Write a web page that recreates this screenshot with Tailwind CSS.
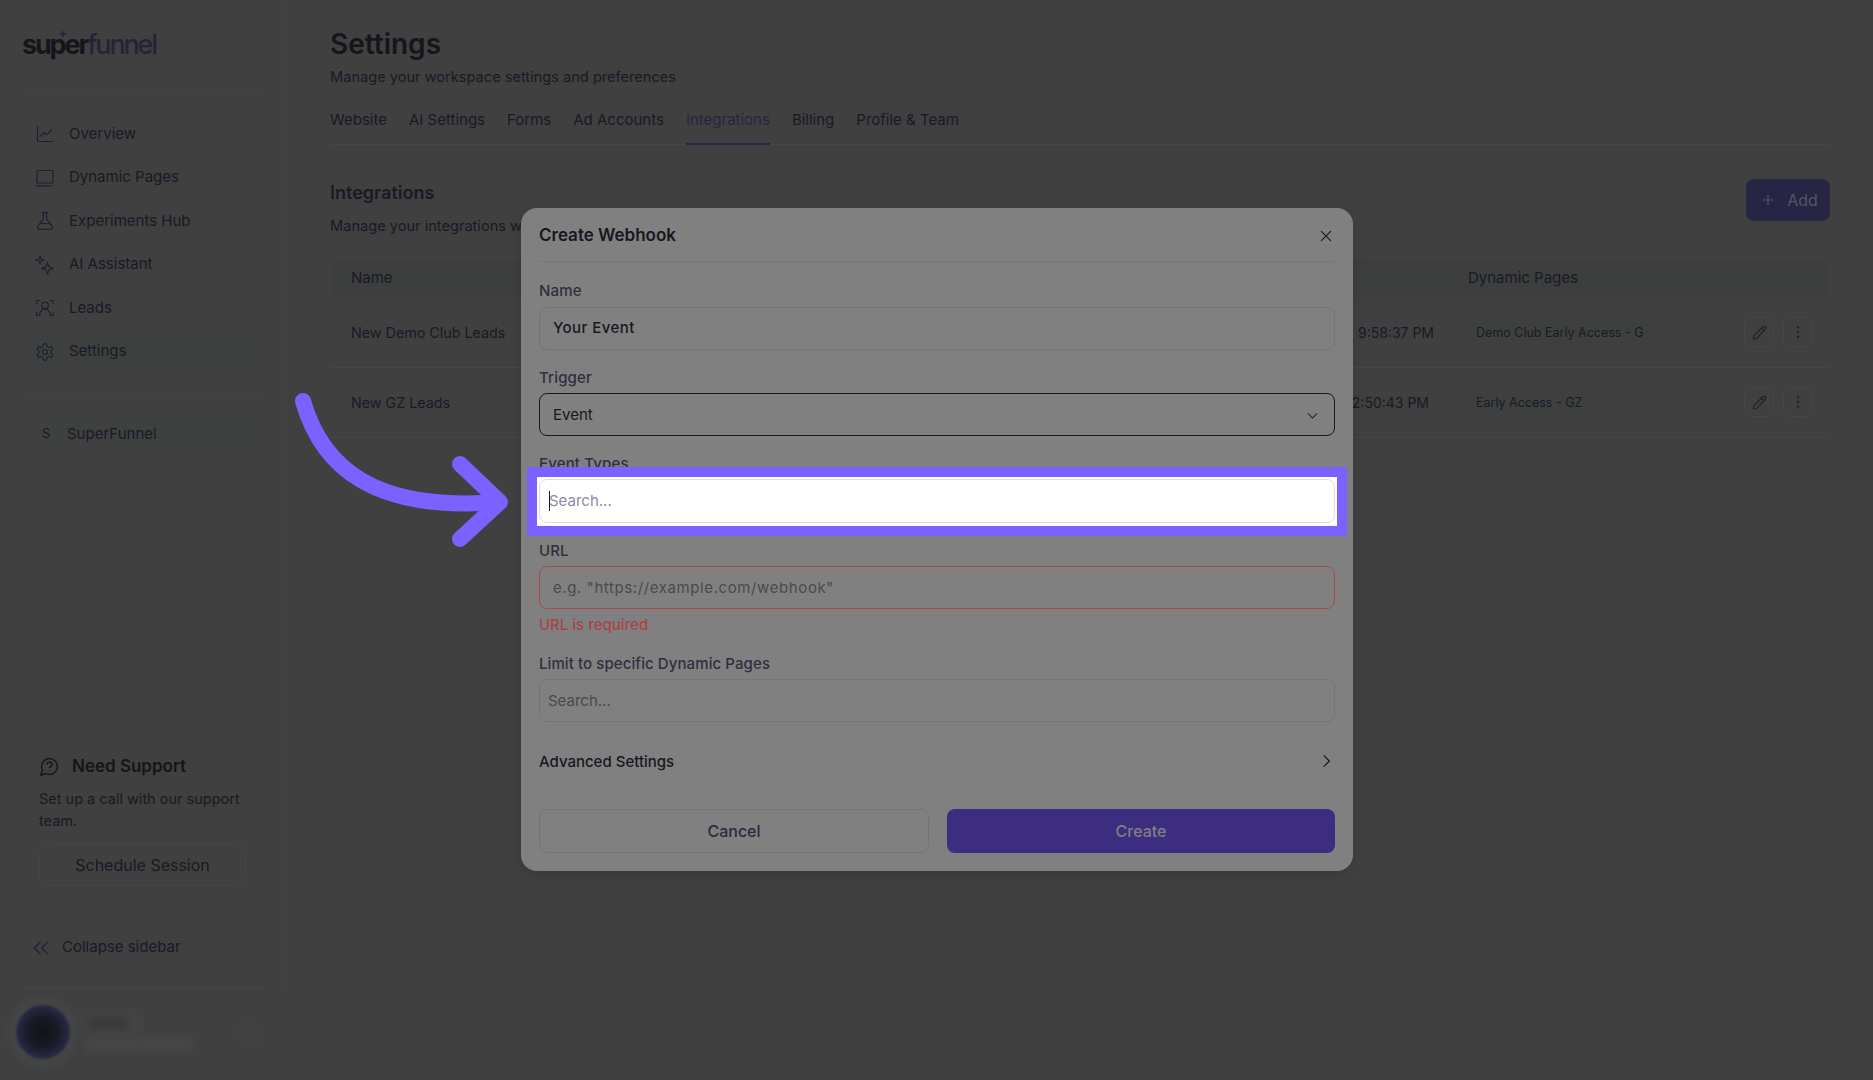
<!DOCTYPE html>
<html lang="en">
<head>
  <meta charset="UTF-8">
  <title>Settings - Integrations</title>
  <script src="https://cdn.jsdelivr.net/npm/@tailwindcss/browser@4"></script>
</head>
<body class="bg-[#404040] font-['Inter',sans-serif] text-[#191926] overflow-hidden">
  <div class="relative h-[1080px] w-[1873px] flex overflow-hidden">

    <!-- sidebar -->
    <aside class="w-[286px] shrink-0 flex flex-col">
      <div class="h-[995px] border-r border-[#434343] px-[22px] flex flex-col">
        <div class="h-[93px] shrink-0 border-b border-[#434343] relative">
          <div class="pt-[25px] text-[27px] leading-[40px] tracking-[-0.08em] font-bold text-[#15151c]">super<span class="font-medium text-[#24233a]">funnel</span></div>
          <svg class="absolute left-[37px] top-[30px] w-[8px] h-[8px]" viewBox="0 0 10 10" fill="#24233a"><path d="M5 0 6.2 3.8 10 5 6.2 6.2 5 10 3.8 6.2 0 5 3.8 3.8Z"/></svg>
        </div>

        <nav class="mt-[22px] flex flex-col gap-[5.5px] text-[15px]">
          <a class="h-[38px] flex items-center gap-[14px] px-[13px]">
            <svg class="w-[20px] h-[20px]" viewBox="0 0 24 24" fill="none" stroke="#1f1f30" stroke-width="1.4" stroke-linecap="round" stroke-linejoin="round"><path d="M3 3v18h19"/><path d="m6 15 5-5 3 3 6-6"/></svg>
            <span>Overview</span>
          </a>
          <a class="h-[38px] flex items-center gap-[14px] px-[13px]">
            <svg class="w-[20px] h-[20px]" viewBox="0 0 24 24" fill="none" stroke="#1f1f30" stroke-width="1.4" stroke-linecap="round" stroke-linejoin="round"><rect x="2.5" y="3" width="19" height="15" rx="1"/><path d="M2 21.5h17M21.5 21.5h.5"/></svg>
            <span>Dynamic Pages</span>
          </a>
          <a class="h-[38px] flex items-center gap-[14px] px-[13px]">
            <svg class="w-[20px] h-[20px]" viewBox="0 0 24 24" fill="none" stroke="#1f1f30" stroke-width="1.4" stroke-linecap="round" stroke-linejoin="round"><path d="M10 2v7.500L3.500 18.500A2.200 2.200 0 0 0 5.300 22h13.400a2.200 2.200 0 0 0 1.800-3.500L14 9.500V2"/><path d="M8.500 2h7M6.500 15h11"/></svg>
            <span>Experiments Hub</span>
          </a>
          <a class="h-[38px] flex items-center gap-[14px] px-[13px]">
            <svg class="w-[20px] h-[20px]" viewBox="0 0 24 24" fill="none" stroke="#1f1f30" stroke-width="1.4" stroke-linejoin="round"><path d="m15 9 1.800 5.200L22 16l-5.200 1.800L15 23l-1.800-5.200L8 16l5.200-1.800Z"/><path d="m6 1 1.200 3.800L11 6 7.200 7.200 6 11 4.800 7.200 1 6l3.800-1.200Z"/></svg>
            <span>AI Assistant</span>
          </a>
          <a class="h-[38px] flex items-center gap-[14px] px-[13px]">
            <svg class="w-[20px] h-[20px]" viewBox="0 0 24 24" fill="none" stroke="#1f1f30" stroke-width="1.4" stroke-linecap="round" stroke-linejoin="round"><path d="M2 7V3h4M18 3h4v4M2 17v4h4M18 21h4v-4"/><circle cx="12" cy="9" r="4"/><path d="M5.500 20c.8-4 3.500-6.500 6.500-6.500s5.700 2.500 6.500 6.500"/></svg>
            <span>Leads</span>
          </a>
          <a class="h-[38px] flex items-center gap-[14px] px-[13px] rounded-[10px] bg-[#3e403f]">
            <svg class="w-[20px] h-[20px]" viewBox="0 0 24 24" fill="none" stroke="#1f1f30" stroke-width="1.4" stroke-linecap="round" stroke-linejoin="round"><path d="M12.220 2h-.44a2 2 0 0 0-2 2v.18a2 2 0 0 1-1 1.730l-.43.250a2 2 0 0 1-2 0l-.150-.080a2 2 0 0 0-2.730.730l-.220.380a2 2 0 0 0 .730 2.730l.150.100a2 2 0 0 1 1 1.720v.510a2 2 0 0 1-1 1.740l-.150.090a2 2 0 0 0-.730 2.730l.220.380a2 2 0 0 0 2.730.730l.150-.080a2 2 0 0 1 2 0l.430.250a2 2 0 0 1 1 1.730V20a2 2 0 0 0 2 2h.44a2 2 0 0 0 2-2v-.18a2 2 0 0 1 1-1.730l.430-.250a2 2 0 0 1 2 0l.150.080a2 2 0 0 0 2.730-.730l.220-.390a2 2 0 0 0-.730-2.730l-.150-.080a2 2 0 0 1-1-1.740v-.500a2 2 0 0 1 1-1.740l.150-.090a2 2 0 0 0 .730-2.730l-.220-.380a2 2 0 0 0-2.730-.730l-.150.080a2 2 0 0 1-2 0l-.430-.250a2 2 0 0 1-1-1.730V4a2 2 0 0 0-2-2z"/><circle cx="12" cy="12" r="3"/></svg>
            <span>Settings</span>
          </a>
        </nav>

        <div class="mt-[22px] border-t border-[#434343]"></div>
        <div class="mt-[21px] h-[39px] rounded-[10px] bg-[#3f4040] flex items-center text-[15px]">
          <span class="w-[45px] pl-[20px] text-[13px]">S</span>
          <span>SuperFunnel</span>
        </div>

        <div class="mt-auto pl-[17px]">
          <div class="flex items-center gap-[12px] text-[17px] font-semibold text-[#15151c]">
            <svg class="w-[21px] h-[21px]" viewBox="0 0 24 24" fill="none" stroke="#15151c" stroke-width="1.600" stroke-linecap="round" stroke-linejoin="round"><path d="M7.900 20A9 9 0 1 0 4 16.100L2 22Z"/><path d="M9.100 9a3 3 0 0 1 5.800 1c0 2-3 3-3 3"/><path d="M12 17h.01"/></svg>
            <span>Need Support</span>
          </div>
          <p class="mt-[9px] w-[207px] text-[14.5px] leading-[22px]">Set up a call with our support team.</p>
          <button class="mt-[11px] w-[207px] h-[43px] rounded-[10px] border border-[#454545] text-[16px] text-center">Schedule Session</button>
        </div>

        <div class="mt-[47px] h-[29px] flex items-center gap-[13px] pl-[11px] text-[15px]">
          <svg class="w-[16px] h-[16px]" viewBox="0 0 24 24" fill="none" stroke="#1f1f38" stroke-width="1.600" stroke-linecap="round" stroke-linejoin="round"><path d="m11 3-9 9 9 9"/><path d="m22 3-9 9 9 9"/></svg>
          <span>Collapse sidebar</span>
        </div>
        <div class="mt-[26px] mb-[6px] border-t border-[#474747]"></div>
      </div>
      <!-- blurred account -->
      <div class="flex-1 relative overflow-hidden">
        <div class="absolute left-[8px] top-[2px] w-[70px] h-[70px] rounded-full bg-[#444746] blur-[4px]"></div>
        <div class="absolute left-[16px] top-[10px] w-[54px] h-[54px] rounded-full bg-[radial-gradient(circle,#12121a_0%,#1a1a26_40%,#2b2947_70%,#3c3d46_100%)] blur-[1px]"></div>
        <div class="absolute left-[82px] top-[16px] w-[58px] h-[24px] rounded bg-[#454746] blur-[5px]"></div>
        <div class="absolute left-[86px] top-[22px] w-[44px] h-[12px] rounded-full bg-[#363838] blur-[4px]"></div>
        <div class="absolute left-[84px] top-[42px] w-[110px] h-[16px] rounded bg-[#454746] blur-[5px]"></div>
        <div class="absolute left-[236px] top-[24px] w-[28px] h-[28px] rounded-full bg-[#424242] blur-[3px]"></div>
      </div>
    </aside>

    <!-- main -->
    <main class="flex-1 pl-[44px] pr-[43px]">
      <h1 class="pt-[26px] text-[28px] leading-[36px] font-semibold text-[#15151c]">Settings</h1>
      <p class="mt-[5px] text-[14.6px] leading-[20px]">Manage your workspace settings and preferences</p>

      <div class="mt-[19px] h-[39px] flex gap-[22px] border-b border-[#464646] text-[15px]">
        <a class="h-[39px] pt-[3px]">Website</a>
        <a class="h-[39px] pt-[3px]">AI Settings</a>
        <a class="h-[39px] pt-[3px]">Forms</a>
        <a class="h-[39px] pt-[3px]">Ad Accounts</a>
        <a class="h-[39px] pt-[3px] border-b-2 border-[#272544] text-[#272544]">Integrations</a>
        <a class="h-[39px] pt-[3px]">Billing</a>
        <a class="h-[39px] pt-[3px]">Profile &amp; Team</a>
      </div>

      <div class="mt-[34px] flex justify-between items-start">
        <div>
          <h2 class="pt-[1px] text-[18px] leading-[26px] font-semibold text-[#1a1a24]">Integrations</h2>
          <p class="mt-[10px] text-[14.6px] leading-[20px]">Manage your integrations with other tools</p>
        </div>
        <button class="w-[84px] h-[42px] rounded-[8px] bg-[#272544] flex items-center justify-center gap-[12px] pl-[3px] text-[16px] text-[#56555f]">
          <svg class="w-[14px] h-[14px]" viewBox="0 0 24 24" fill="none" stroke="#56555f" stroke-width="2" stroke-linecap="round"><path d="M12 4v16M4 12h16"/></svg>
          Add
        </button>
      </div>

      <div class="mt-[23px]">
        <div class="h-[39px] rounded-[8px] bg-[#3d3f3e] grid grid-cols-[1117px_1fr] items-center pl-[21px] text-[15px]">
          <span>Name</span>
          <span>Dynamic Pages</span>
        </div>
        <div class="h-[70px] border-b border-[#464646] grid grid-cols-[1000px_83px_1fr_30px_30px] items-center pl-[21px] pr-[17px] text-[14.3px]">
          <span>New Demo Club Leads</span>
          <span class="text-[14px] whitespace-nowrap justify-self-end">9:58:37 PM</span>
          <span class="ml-[34px]"><span class="inline-block h-[25px] leading-[25px] px-[8px] rounded-[6px] bg-[#3e403f] text-[12.5px]">Demo Club Early Access - G</span></span>
          <button class="w-[30px] h-[30px] rounded-[8px] border border-[#464646] flex items-center justify-center -ml-[9px] -mt-[1px]">
            <svg class="w-[15px] h-[15px]" viewBox="0 0 24 24" fill="none" stroke="#1f1f30" stroke-width="1.800" stroke-linecap="round" stroke-linejoin="round"><path d="M21.200 6.800a2.800 2.800 0 0 0-4-4L3.800 16.200a2 2 0 0 0-.5.830L2 21.800a.5.500 0 0 0 .620.620l4.800-1.300a2 2 0 0 0 .830-.5z"/><path d="m15 5 4 4"/></svg>
          </button>
          <button class="w-[30px] h-[30px] rounded-[8px] border border-[#464646] flex items-center justify-center -mt-[1px]">
            <svg class="w-[16px] h-[16px]" viewBox="0 0 24 24" fill="#1f1f30"><circle cx="12" cy="5" r="1.800"/><circle cx="12" cy="12" r="1.800"/><circle cx="12" cy="19" r="1.800"/></svg>
          </button>
        </div>
        <div class="h-[70px] border-b border-[#464646] grid grid-cols-[1000px_83px_1fr_30px_30px] items-center pl-[21px] pr-[17px] text-[14.3px]">
          <span>New GZ Leads</span>
          <span class="text-[14px] whitespace-nowrap justify-self-end -translate-x-[5px]">12:50:43 PM</span>
          <span class="ml-[34px]"><span class="inline-block h-[25px] leading-[25px] px-[8px] rounded-[6px] bg-[#3e403f] text-[12.5px]">Early Access - GZ</span></span>
          <button class="w-[30px] h-[30px] rounded-[8px] border border-[#464646] flex items-center justify-center -ml-[9px] -mt-[1px]">
            <svg class="w-[15px] h-[15px]" viewBox="0 0 24 24" fill="none" stroke="#1f1f30" stroke-width="1.800" stroke-linecap="round" stroke-linejoin="round"><path d="M21.200 6.800a2.800 2.800 0 0 0-4-4L3.800 16.200a2 2 0 0 0-.5.830L2 21.800a.5.500 0 0 0 .620.620l4.800-1.300a2 2 0 0 0 .830-.5z"/><path d="m15 5 4 4"/></svg>
          </button>
          <button class="w-[30px] h-[30px] rounded-[8px] border border-[#464646] flex items-center justify-center -mt-[1px]">
            <svg class="w-[16px] h-[16px]" viewBox="0 0 24 24" fill="#1f1f30"><circle cx="12" cy="5" r="1.800"/><circle cx="12" cy="12" r="1.800"/><circle cx="12" cy="19" r="1.800"/></svg>
          </button>
        </div>
      </div>
    </main>

    <!-- modal -->
    <div class="absolute left-[521px] top-[208px] w-[832px] h-[663px] rounded-[16px] bg-[#808080] px-[18px] shadow-[0_4px_12px_rgba(0,0,0,0.12)]">
      <div class="h-[54px] border-b border-[#787878] flex items-center justify-between pt-[3px]">
        <span class="text-[17px] font-semibold text-[#17171f]">Create Webhook</span>
        <svg class="w-[16px] h-[16px] mr-[1px] -mt-[1px]" viewBox="0 0 24 24" fill="none" stroke="#1a1a24" stroke-width="1.700" stroke-linecap="round"><path d="M5 5l14 14M19 5 5 19"/></svg>
      </div>

      <label class="mt-[19px] block h-[20px] leading-[20px] text-[15px] font-medium text-[#2f2f3f] tracking-[0.01em]">Name</label>
      <div class="mt-[6px] h-[43px] rounded-[8px] border border-[#757575] flex items-center px-[13px] text-[15px] font-medium text-[#17171f] tracking-[0.03em]">Your Event</div>

      <label class="mt-[18px] block h-[20px] leading-[20px] text-[15px] font-medium text-[#2f2f3f] tracking-[0.01em]">Trigger</label>
      <div class="mt-[5px] h-[43px] rounded-[8px] border border-[#17171f] flex items-center justify-between px-[13px] pt-[1px] text-[15px] text-[#17171f]">
        <span>Event</span>
        <svg class="w-[15px] h-[15px] mr-[1px]" viewBox="0 0 24 24" fill="none" stroke="#2a2a3e" stroke-width="1.800" stroke-linecap="round" stroke-linejoin="round"><path d="m5 9 7 7 7-7"/></svg>
      </div>

      <label class="mt-[18px] block h-[20px] leading-[20px] text-[15px] font-medium text-[#2f2f3f] tracking-[0.01em]">Event Types</label>
      <div class="relative -mx-[12px] -mt-[7px] h-[69px] border-[10px] border-[#7b61ff] bg-white p-[2px]">
        <div class="h-[44px] rounded-[8px] border border-[#dcdce6] flex items-center pl-[9px] text-[15px] text-[#8d8aa8]">
          <span class="w-px h-[20px] bg-[#17171f] -mr-px"></span>
          <span>Search...</span>
        </div>
      </div>

      <label class="mt-[5px] block h-[20px] leading-[20px] text-[15px] font-medium text-[#2f2f3f] tracking-[0.01em]">URL</label>
      <div class="mt-[5px] h-[43px] rounded-[8px] border border-[#a94a4a] flex items-center px-[13px] pt-[1px] text-[15px] text-[#4a4a4a] tracking-[0.04em]">e.g. "https://example.com/webhook"</div>
      <p class="mt-[6px] h-[20px] leading-[20px] text-[15px] font-medium text-[#a84444]">URL is required</p>

      <label class="mt-[19px] block h-[20px] leading-[20px] text-[15px] font-medium text-[#2f2f3f] tracking-[0.006em]">Limit to specific Dynamic Pages</label>
      <div class="mt-[5px] h-[43px] rounded-[8px] border border-[#757575] flex items-center px-[8px] pt-[1px] text-[15px] text-[#4a4a4a]">Search...</div>

      <div class="mt-[29px] h-[22px] flex items-center justify-between text-[15px] font-medium text-[#17171f]">
        <span>Advanced Settings</span>
        <svg class="w-[16px] h-[16px] mr-[1px] -mt-[3px]" viewBox="0 0 24 24" fill="none" stroke="#17171f" stroke-width="1.800" stroke-linecap="round" stroke-linejoin="round"><path d="m9 4 8 8-8 8"/></svg>
      </div>

      <div class="mt-[36px] grid grid-cols-[390px_388px] gap-x-[18px]">
        <button class="h-[44px] rounded-[8px] border border-[#757575] text-[16px] font-medium text-[#2a2a3e]">Cancel</button>
        <button class="h-[44px] rounded-[8px] bg-[#3c2d80] text-[16px] font-medium text-[#808080]">Create</button>
      </div>
    </div>

    <!-- annotation arrow -->
    <svg class="absolute left-0 top-0 w-[1873px] h-[1080px] pointer-events-none" viewBox="0 0 1873 1080" fill="none" stroke="#7b61ff" stroke-width="16" stroke-linecap="round" stroke-linejoin="round">
      <path d="M303 401C322 468 375 512 498 502"/>
      <path d="M460 464 500 502 460 539"/>
    </svg>
  </div>
</body>
</html>
